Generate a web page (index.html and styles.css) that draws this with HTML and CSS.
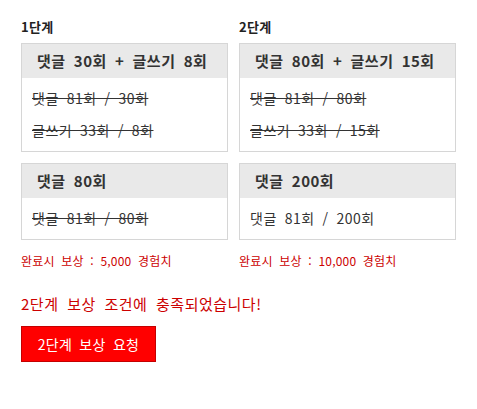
FILE: index.html
```html
<!DOCTYPE html>
<html lang="ko">
<head>
<meta charset="utf-8">
<title>단계 보상</title>
<link rel="stylesheet" href="styles.css">
</head>
<body>
<div class="wrap">
  <div class="stages">
    <div class="stage-label">1단계</div>
    <div class="stage-label">2단계</div>

    <div class="box">
      <div class="box-head">댓글 30회 + 글쓰기 8회</div>
      <div class="box-body">
        <div class="line done">댓글 81회 / 30회</div>
        <div class="line done">글쓰기 33회 / 8회</div>
      </div>
    </div>
    <div class="box">
      <div class="box-head">댓글 80회 + 글쓰기 15회</div>
      <div class="box-body">
        <div class="line done">댓글 81회 / 80회</div>
        <div class="line done">글쓰기 33회 / 15회</div>
      </div>
    </div>

    <div class="box">
      <div class="box-head">댓글 80회</div>
      <div class="box-body">
        <div class="line done">댓글 81회 / 80회</div>
      </div>
    </div>
    <div class="box">
      <div class="box-head">댓글 200회</div>
      <div class="box-body">
        <div class="line">댓글 81회 / 200회</div>
      </div>
    </div>

    <div class="reward">완료시 보상 : 5,000 경험치</div>
    <div class="reward">완료시 보상 : 10,000 경험치</div>
  </div>

  <p class="notice">2단계 보상 조건에 충족되었습니다!</p>
  <button class="claim" type="button">2단계 보상 요청</button>
</div>
</body>
</html>
```

FILE: styles.css
```css
html, body {
  margin: 0;
  padding: 0;
  background: #fff;
}

body {
  font-family: "Noto Sans CJK KR", "Noto Sans", sans-serif;
  color: #333;
}

.wrap {
  padding: 18px 0 0 21px;
}

.stages {
  display: grid;
  grid-template-columns: 207px 217px;
  column-gap: 11px;
  row-gap: 11px;
}

.stage-label {
  font-size: 13px;
  font-weight: bold;
  line-height: 18px;
  letter-spacing: 0.3px;
  color: #222;
  margin-bottom: -4px;
}

.box {
  border: 1px solid #d6d6d6;
  background: #fff;
}

.box-head {
  background: #e9e9e9;
  height: 34px;
  line-height: 34px;
  padding-left: 15px;
  font-size: 15px;
  font-weight: bold;
  letter-spacing: 0.5px;
  word-spacing: 3.5px;
  color: #333;
  white-space: nowrap;
}

.box-body {
  padding: 4px 10px 5px;
}

.line {
  font-size: 14px;
  line-height: 32px;
  letter-spacing: 0.5px;
  word-spacing: 3.5px;
  color: #333;
  white-space: nowrap;
}

.line.done {
  text-decoration: line-through;
}

.reward {
  font-size: 12px;
  line-height: 18px;
  letter-spacing: 0.2px;
  word-spacing: 3px;
  color: #cc0000;
  margin-top: 1px;
}

.notice {
  margin: 24px 0 0;
  font-size: 15px;
  line-height: 20px;
  letter-spacing: 0.5px;
  word-spacing: 4px;
  color: #cc0000;
}

.claim {
  display: block;
  margin-top: 12px;
  width: 135px;
  height: 36px;
  padding: 0;
  background: #ff0000;
  border: 1px solid #c40000;
  color: #fff;
  font-family: "Noto Sans CJK KR", "Noto Sans", sans-serif;
  font-size: 14px;
  letter-spacing: 0.3px;
  word-spacing: 3px;
}
```
